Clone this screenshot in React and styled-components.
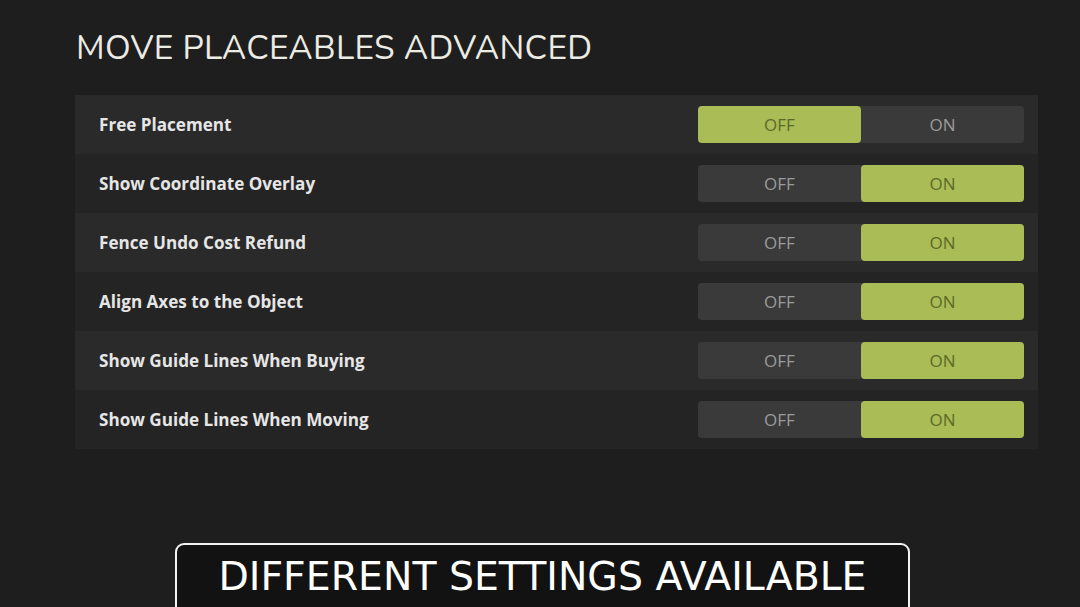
import React from "react";
import styled, { createGlobalStyle } from "styled-components";

const Global = createGlobalStyle`
  html, body { margin: 0; padding: 0; background: #1e1e1e; }
  body { width: 1080px; height: 607px; overflow: hidden; }
`;

const Page = styled.div`
  width: 1080px;
  height: 607px;
  box-sizing: border-box;
  padding-left: 75px;
  background: #1e1e1e;
  display: flex;
  flex-direction: column;
  align-items: flex-start;
  overflow: hidden;
`;

const Content = styled.div`
  width: 963px;
  padding-top: 28px;
  display: flex;
  flex-direction: column;
`;

const Title = styled.h1`
  margin: 0 0 0 1px;
  font-family: "Nunito", "Lato", "Liberation Sans", sans-serif;
  font-weight: 400;
  font-size: 33.5px;
  line-height: 40px;
  letter-spacing: 0.3px;
  color: #ecebe4;
`;

const List = styled.div`
  margin-top: 27px;
  display: flex;
  flex-direction: column;
`;

const Row = styled.div`
  height: 59px;
  display: flex;
  align-items: center;
  justify-content: space-between;
  padding: 0 14px 0 24px;
  background: ${(p) => (p.$alt ? "#242424" : "#2a2a2a")};
`;

const Label = styled.span`
  font-family: "Open Sans", "Lato", sans-serif;
  font-weight: 700;
  font-size: 17.1px;
  color: #e6e6e6;
`;

const Toggle = styled.div`
  width: 326px;
  height: 37px;
  display: grid;
  grid-template-columns: 1fr 1fr;
  background: #3a3a3a;
  border-radius: 4px;
`;

const Option = styled.div`
  display: flex;
  align-items: center;
  justify-content: center;
  border-radius: 4px;
  font-family: "Open Sans", "Liberation Sans", sans-serif;
  font-size: 17px;
  color: ${(p) => (p.$active ? "#5c6a27" : "#9b9b9b")};
  background: ${(p) => (p.$active ? "#aabc56" : "transparent")};
`;

const Banner = styled.div`
  margin-top: auto;
  margin-bottom: -20px;
  margin-left: 100px;
  width: 735px;
  height: 84px;
  box-sizing: border-box;
  border: 2px solid #f2f2f2;
  border-radius: 9px;
  background: #121212;
  display: flex;
  justify-content: center;
  padding-top: 8px;
`;

const BannerText = styled.span`
  font-family: "DejaVu Sans", sans-serif;
  font-size: 39.4px;
  line-height: 46px;
  color: #ffffff;
`;

const settings = [
  { label: "Free Placement", on: false },
  { label: "Show Coordinate Overlay", on: true },
  { label: "Fence Undo Cost Refund", on: true },
  { label: "Align Axes to the Object", on: true },
  { label: "Show Guide Lines When Buying", on: true },
  { label: "Show Guide Lines When Moving", on: true },
];

export default function App() {
  return (
    <>
      <Global />
      <Page>
        <Content>
          <Title>MOVE PLACEABLES ADVANCED</Title>
          <List>
            {settings.map((s, i) => (
              <Row key={s.label} $alt={i % 2 === 1}>
                <Label>{s.label}</Label>
                <Toggle>
                  <Option $active={!s.on}>OFF</Option>
                  <Option $active={s.on}>ON</Option>
                </Toggle>
              </Row>
            ))}
          </List>
        </Content>
        <Banner>
          <BannerText>DIFFERENT SETTINGS AVAILABLE</BannerText>
        </Banner>
      </Page>
    </>
  );
}
